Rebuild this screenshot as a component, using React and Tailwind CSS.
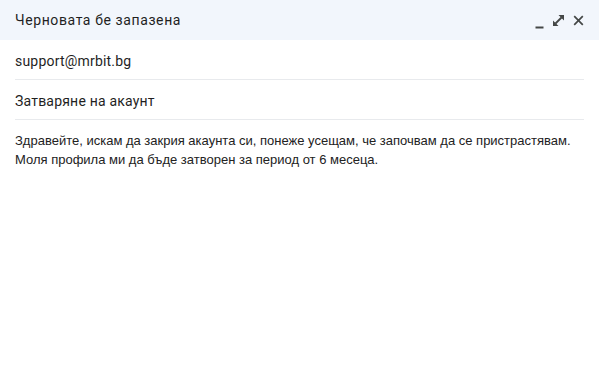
export default function App() {
  return (
    <div className="w-[599px] h-[384px] bg-white overflow-hidden">
      <div className="h-[40px] bg-[#f2f6fc] flex items-center justify-between pl-[15px] pr-[15px]">
        <span className="text-[14px] text-[#1f1f1f] font-['Roboto',sans-serif] tracking-[0.6px] pt-[1px]">Черновата бе запазена</span>
        <div className="flex items-center gap-[9px] text-[#444746] pt-[1px]">
          <svg width="9" height="10" viewBox="0 0 9 10" className="mt-[6px]">
            <rect x="0.5" y="7.5" width="8" height="2" fill="currentColor" />
          </svg>
          <svg width="11" height="11" viewBox="0 0 11 11">
            <path d="M5.5 0H11V5.5Z M0 5.5V11H5.5Z" fill="currentColor" />
            <path d="M8.5 2.5L2.5 8.5" stroke="currentColor" strokeWidth="1.8" fill="none" />
          </svg>
          <svg width="11" height="11" viewBox="0 0 11 11">
            <path d="M1.2 1.2L9.8 9.8M9.8 1.2L1.2 9.8" stroke="currentColor" strokeWidth="1.7" fill="none" />
          </svg>
        </div>
      </div>
      <div className="mx-[15px] font-['Roboto',sans-serif] text-[14px] tracking-[0.2px] text-[#1f1f1f]">
        <div className="h-[40px] flex items-center pt-[3px] border-b border-[#e8eaed]">support@mrbit.bg</div>
        <div className="h-[40px] flex items-center pt-[3px] border-b border-[#e8eaed]">Затваряне на акаунт</div>
      </div>
      <div className="px-[15px] pt-[11px] font-['Liberation_Sans',Arial,sans-serif] text-[13px] leading-[19px] text-[#222222]">
        <div>Здравейте, искам да закрия акаунта си, понеже усещам, че започвам да се пристрастявам.</div>
        <div>Моля профила ми да бъде затворен за период от 6 месеца.</div>
      </div>
    </div>
  );
}
